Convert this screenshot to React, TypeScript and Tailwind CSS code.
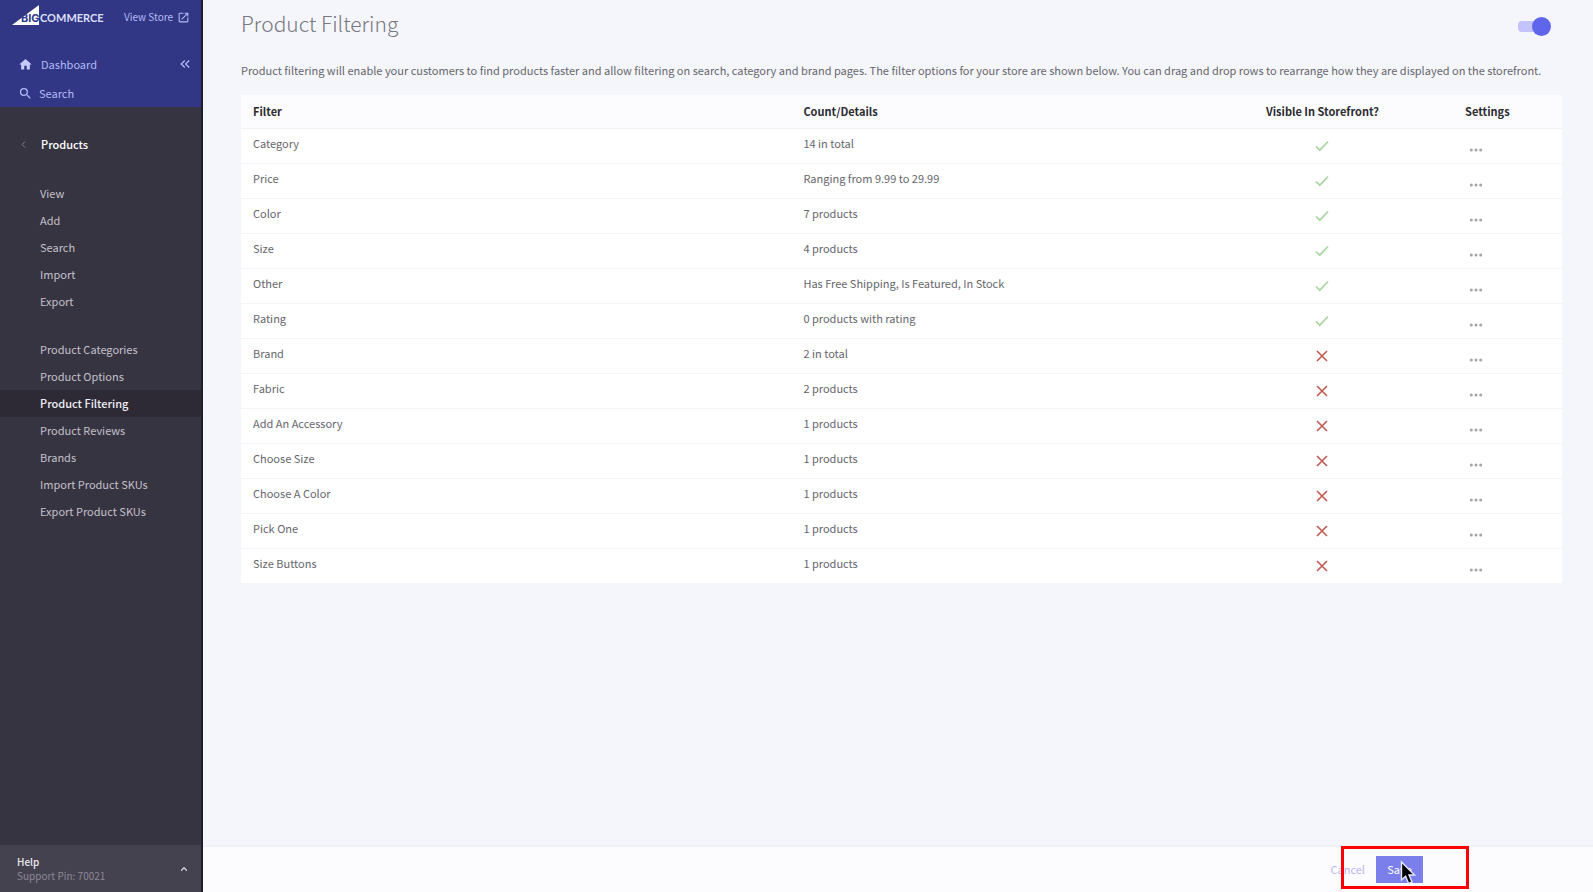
import { useState } from "react";
import { MdHome, MdSearch, MdOpenInNew, MdKeyboardDoubleArrowLeft } from "react-icons/md";
import { ChevronLeft, ChevronUp } from "lucide-react";

type Filter = {
  name: string;
  details: string;
  visible: boolean;
};

const filters: Filter[] = [
  { name: "Category", details: "14 in total", visible: true },
  { name: "Price", details: "Ranging from 9.99 to 29.99", visible: true },
  { name: "Color", details: "7 products", visible: true },
  { name: "Size", details: "4 products", visible: true },
  { name: "Other", details: "Has Free Shipping, Is Featured, In Stock", visible: true },
  { name: "Rating", details: "0 products with rating", visible: true },
  { name: "Brand", details: "2 in total", visible: false },
  { name: "Fabric", details: "2 products", visible: false },
  { name: "Add An Accessory", details: "1 products", visible: false },
  { name: "Choose Size", details: "1 products", visible: false },
  { name: "Choose A Color", details: "1 products", visible: false },
  { name: "Pick One", details: "1 products", visible: false },
  { name: "Size Buttons", details: "1 products", visible: false },
];

const productLinks = ["View", "Add", "Search", "Import", "Export"];
const catalogLinks = [
  "Product Categories",
  "Product Options",
  "Product Filtering",
  "Product Reviews",
  "Brands",
  "Import Product SKUs",
  "Export Product SKUs",
];

const Logo = () => (
  <svg width="92" height="24" viewBox="0 0 92 24" role="img" aria-label="BigCommerce">
    <path d="M0 20L27 0V20Z" fill="#fff" />
    <text x="9" y="17" fontSize="11" fontWeight="700" fill="#31378a" fontFamily="Inter, sans-serif">
      BIG
    </text>
    <text x="28" y="17" fontSize="11" fontWeight="700" fill="#dcdffa" fontFamily="Lato, sans-serif">
      COMMERCE
    </text>
  </svg>
);

const CheckIcon = () => (
  <svg width="14" height="12" viewBox="0 0 14 12" fill="none" stroke="#a9d6a0" strokeWidth="1.7" role="img" aria-label="Visible">
    <path d="M1 6.5L4.8 10.2L13 1.5" />
  </svg>
);

const CrossIcon = () => (
  <svg width="12" height="12" viewBox="0 0 12 12" fill="none" stroke="#c25850" strokeWidth="1.6" role="img" aria-label="Hidden">
    <path d="M1 1L11 11M11 1L1 11" />
  </svg>
);

const DotsIcon = () => (
  <svg width="14" height="4" viewBox="0 0 14 4" fill="#a3a3a8">
    <circle cx="2.3" cy="2" r="1.5" />
    <circle cx="7" cy="2" r="1.5" />
    <circle cx="11.7" cy="2" r="1.5" />
  </svg>
);

const NavList = ({ links }: { links: string[] }) => (
  <ul>
    {links.map((link) => (
      <li key={link}>
        <a
          href="#"
          className={
            link === "Product Filtering"
              ? "block bg-[#2d2a36] pl-10 text-[11px] leading-[27px] font-medium text-[#f0eff5]"
              : "block pl-10 text-[11px] leading-[27px] text-[#c3c1cb]"
          }
        >
          {link}
        </a>
      </li>
    ))}
  </ul>
);

const Sidebar = () => (
  <aside className="flex w-[203px] shrink-0 flex-col border-r-2 border-[#1f1c2b] bg-[#373441]">
    <div className="h-[107px] bg-[#313785] text-[#b4baf5]">
      <div className="flex items-center justify-between pt-[5px] pr-[11px] pl-3">
        <Logo />
        <a href="#" className="flex items-center gap-1 text-[10px] leading-6">
          View Store
          <MdOpenInNew size={13} />
        </a>
      </div>
      <div className="mt-[23px] flex h-6 items-center justify-between pr-2 pl-[18px]">
        <a href="#" className="flex items-center gap-2 text-[11px] leading-6">
          <MdHome size={15} className="text-[#c5cbff]" />
          Dashboard
        </a>
        <button aria-label="Collapse menu">
          <MdKeyboardDoubleArrowLeft size={16} />
        </button>
      </div>
      <a href="#" className="mt-[5px] flex items-center gap-[6px] pl-[18px] text-[11px] leading-6">
        <MdSearch size={15} />
        Search
      </a>
    </div>
    <a href="#" className="mt-[25px] mb-6 flex items-center gap-3 pl-[18px] text-[11px] leading-6 font-medium text-white">
      <ChevronLeft size={11} className="text-[#8d8a98]" />
      Products
    </a>
    <nav className="flex flex-col gap-[21px]">
      <NavList links={productLinks} />
      <NavList links={catalogLinks} />
    </nav>
    <button className="mt-auto flex h-[47px] items-center justify-between bg-[#45424f] pr-3 pl-[17px] text-left">
      <span>
        <span className="block text-[10px] leading-[14px] font-medium text-[#eceaf2]">Help</span>
        <span className="block text-[10px] leading-[14px] text-[#8b8896]">Support Pin: 70021</span>
      </span>
      <ChevronUp size={10} className="text-[#d5d3dd]" strokeWidth={3} />
    </button>
  </aside>
);

const FilterTable = () => (
  <table className="w-full table-fixed bg-white text-left text-[11px] leading-4 text-[#66666c]">
    <thead>
      <tr className="h-[33px] border-b border-[#f1f1f6] bg-[#fcfcfe] text-[#2c2c33]">
        <th className="w-5/12 px-3 font-bold">Filter</th>
        <th className="w-[29.4%] px-3 font-bold">Count/Details</th>
        <th className="w-[21.6%] text-center font-bold">Visible In Storefront?</th>
        <th className="font-bold">Settings</th>
      </tr>
    </thead>
    <tbody>
      {filters.map((filter) => (
        <tr key={filter.name} className="h-[35px] border-b border-[#f4f4f8] last:border-0">
          <td className="px-3 pb-[5px]">{filter.name}</td>
          <td className="px-3 pb-[5px]">{filter.details}</td>
          <td>
            <span className="flex justify-center">{filter.visible ? <CheckIcon /> : <CrossIcon />}</span>
          </td>
          <td>
            <button className="block px-1 pt-3 pb-1" aria-label={`${filter.name} settings`}>
              <DotsIcon />
            </button>
          </td>
        </tr>
      ))}
    </tbody>
  </table>
);

const App = () => {
  const [enabled, setEnabled] = useState(true);
  return (
    <div className="flex min-h-screen bg-[#f5f6fb] font-['Noto_Sans_CJK_SC','Open_Sans',sans-serif]">
      <Sidebar />
      <div className="flex min-w-0 flex-1 flex-col">
        <main className="flex-1 pr-[31px] pl-[38px]">
          <div className="flex items-end justify-between pt-1 pr-[11px]">
            <h1 className="text-[21px] leading-[38px] font-light text-[#77777d]">Product Filtering</h1>
            <label className="relative mb-[6px] flex h-5 w-[33px] items-center">
              <input
                type="checkbox"
                className="peer sr-only"
                aria-label="Enable product filtering"
                checked={enabled}
                onChange={(e) => setEnabled(e.target.checked)}
              />
              <span className="h-[11px] w-7 rounded-sm bg-[#c3c3fb]" />
              <span className="absolute left-0 size-[19px] rounded-full bg-gray-400 peer-checked:right-0 peer-checked:left-auto peer-checked:bg-[#6066ec]" />
            </label>
          </div>
          <p className="mt-[18px] mb-[15px] text-[11px] leading-5 text-[#66666c]">
            Product filtering will enable your customers to find products faster and allow filtering on search, category
            and brand pages. The filter options for your store are shown below. You can drag and drop rows to rearrange
            how they are displayed on the storefront.
          </p>
          <FilterTable />
        </main>
        <footer className="flex h-[47px] items-center justify-end gap-[11px] border-t-2 border-[#f0f0f5] bg-[#fcfcfe] pr-[170px] text-[11px]">
          <button className="text-[#b9b7ee]">Cancel</button>
          <div className="relative">
            <button className="h-[27px] w-[47px] bg-[#7b7fec] text-white">Save</button>
            <div className="pointer-events-none absolute -top-[10px] -left-[35px] h-[43px] w-32 border-3 border-[#fb0007]" />
            <svg className="pointer-events-none absolute top-1 left-6" width="17" height="26" viewBox="0 0 17 26">
              <path d="M1.5 2V20L5.6 16.2L8.6 23.4L12 22L9 15H14.5Z" fill="#000" stroke="#e6e6fa" strokeWidth="1.4" />
            </svg>
          </div>
        </footer>
      </div>
    </div>
  );
};
export default App;
